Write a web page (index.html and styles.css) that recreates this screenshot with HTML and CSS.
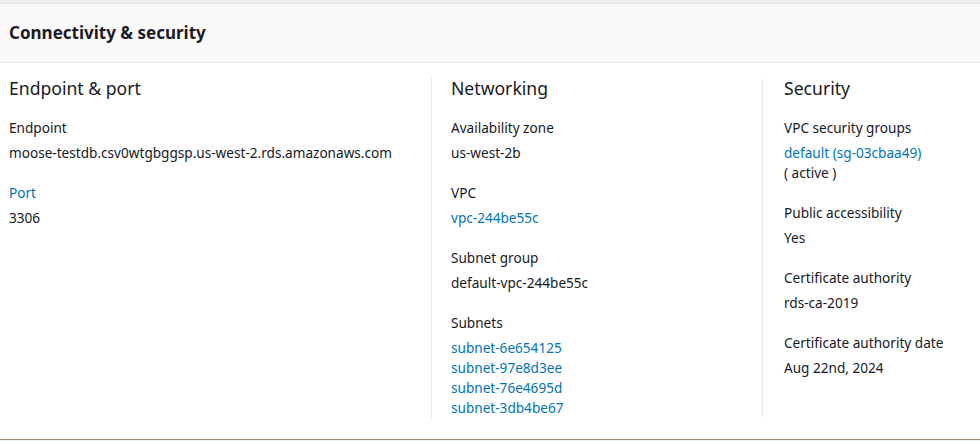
FILE: index.html
```html
<!DOCTYPE html>
<html lang="en">
<head>
<meta charset="utf-8">
<title>Connectivity &amp; security</title>
<link rel="stylesheet" href="styles.css">
</head>
<body>
<div class="top-strip"></div>
<section class="panel">
  <header class="panel-header">
    <h2 class="panel-title">Connectivity &amp; security</h2>
  </header>
  <div class="panel-body">
    <div class="column col-first">
      <h3 class="col-title">Endpoint &amp; port</h3>
      <div class="kv">
        <div class="key">Endpoint</div>
        <div class="value">moose-testdb.csv0wtgbggsp.us-west-2.rds.amazonaws.com</div>
      </div>
      <div class="kv">
        <div class="key key-link">Port</div>
        <div class="value">3306</div>
      </div>
    </div>
    <div class="column col-mid">
      <h3 class="col-title">Networking</h3>
      <div class="kv">
        <div class="key">Availability zone</div>
        <div class="value">us-west-2b</div>
      </div>
      <div class="kv">
        <div class="key">VPC</div>
        <div class="value"><a class="link" href="#">vpc-244be55c</a></div>
      </div>
      <div class="kv">
        <div class="key">Subnet group</div>
        <div class="value">default-vpc-244be55c</div>
      </div>
      <div class="kv">
        <div class="key">Subnets</div>
        <div class="value">
          <a class="link block" href="#">subnet-6e654125</a>
          <a class="link block" href="#">subnet-97e8d3ee</a>
          <a class="link block" href="#">subnet-76e4695d</a>
          <a class="link block" href="#">subnet-3db4be67</a>
        </div>
      </div>
    </div>
    <div class="column col-last">
      <h3 class="col-title">Security</h3>
      <div class="kv">
        <div class="key">VPC security groups</div>
        <div class="value">
          <a class="link block" href="#">default (sg-03cbaa49)</a>
          <span class="block">( active )</span>
        </div>
      </div>
      <div class="kv">
        <div class="key">Public accessibility</div>
        <div class="value">Yes</div>
      </div>
      <div class="kv">
        <div class="key">Certificate authority</div>
        <div class="value">rds-ca-2019</div>
      </div>
      <div class="kv">
        <div class="key">Certificate authority date</div>
        <div class="value">Aug 22nd, 2024</div>
      </div>
    </div>
  </div>
</section>
<div class="bottom-strip"></div>
</body>
</html>
```

FILE: styles.css
```css
html, body {
  margin: 0;
  padding: 0;
  background: #ffffff;
}

body {
  font-family: "Noto Sans", "Open Sans", sans-serif;
  color: #16191f;
  font-size: 13.6px;
  line-height: 20px;
}

.top-strip {
  height: 3px;
  background: #eceeec;
}

.panel {
  border-top: 1px solid #e4e8e5;
  border-bottom: 1px solid #a88b6c;
}

.panel-header {
  background: #fafafa;
  border-bottom: 1px solid #e3e9e6;
  padding: 17px 9px;
}

.panel-title {
  margin: 0;
  font-size: 17px;
  line-height: 24px;
  font-weight: 700;
  color: #1d1a28;
}

.panel-body {
  display: grid;
  grid-template-columns: 431px 331px 1fr;
  padding: 15px 0 21px;
}

.column {
  display: flex;
  flex-direction: column;
  gap: 20px;
}

.col-first {
  padding-left: 9px;
}

.col-mid {
  border-left: 1px solid #e6ebe8;
  padding-left: 19px;
}

.col-last {
  border-left: 1px solid #e6ebe8;
  padding-left: 21px;
}

.col-title {
  margin: 0;
  font-size: 17.6px;
  line-height: 20px;
  font-weight: 400;
  color: #16191f;
}

.kv {
  display: flex;
  flex-direction: column;
  gap: 5px;
}

.key {
  color: #16191f;
}

.key-link {
  color: #0073bb;
}

.value {
  color: #16191f;
}

.link {
  color: #0073bb;
  text-decoration: none;
}

.block {
  display: block;
}

.bottom-strip {
  height: 3px;
  background: #eef3f0;
}
```
